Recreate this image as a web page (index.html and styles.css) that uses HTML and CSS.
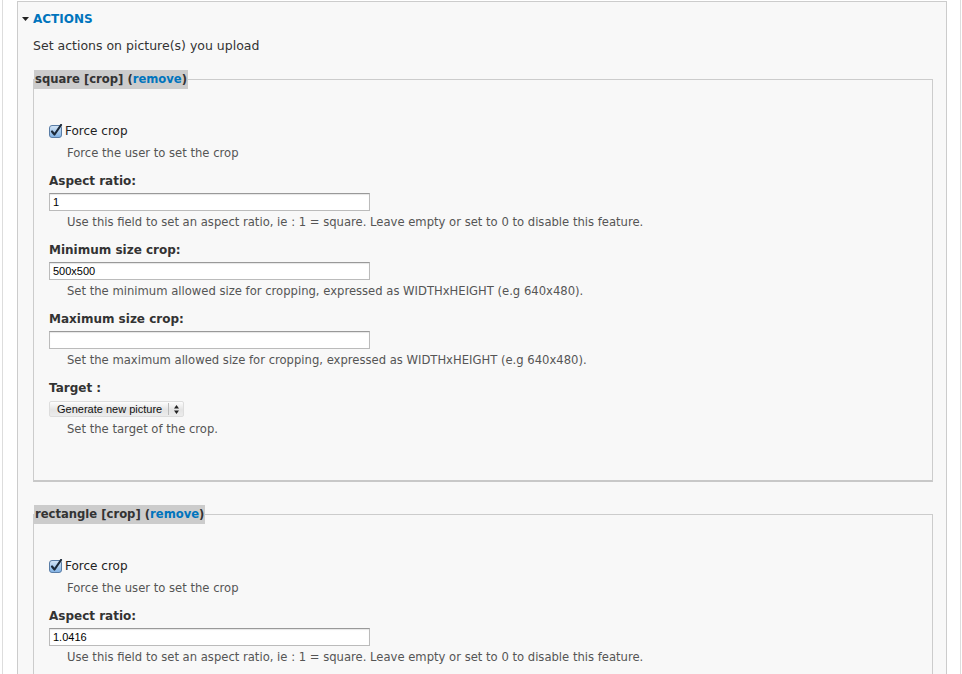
FILE: index.html
```html
<!DOCTYPE html>
<html lang="en">
<head>
    <meta charset="UTF-8">
    <meta name="viewport" content="width=device-width, initial-scale=1.0">
    <title>Actions</title>
    <link rel="stylesheet" href="styles.css">
</head>
<body>

    <div class="page">
        <div class="actions">
            <div class="actions-title">
                <svg class="toggle" width="7" height="4" viewBox="0 0 7 4"><path d="M0 0h7L3.5 4z" fill="#222"/></svg>
                <a href="#">ACTIONS</a>
            </div>
            <div class="actions-intro">Set actions on picture(s) you upload</div>

            <!-- first action -->
            <fieldset class="action">
                <legend>square [crop] (<a href="#">remove</a>)</legend>
                <div class="action-body">
                    <div class="check-row">
                        <svg class="checkbox" width="14" height="14" viewBox="0 0 14 14">
                            <defs>
                                <linearGradient id="cb1" x1="0" y1="0" x2="0" y2="1">
                                    <stop offset="0" stop-color="#d5e6f7"/>
                                    <stop offset="1" stop-color="#7fb0e3"/>
                                </linearGradient>
                            </defs>
                            <rect x="0.5" y="1.5" width="12" height="12" rx="2.5" fill="url(#cb1)" stroke="#5a7da6"/>
                            <path d="M3 7.5l2.5 3L12 1" fill="none" stroke="#1c2a3a" stroke-width="2.2" stroke-linecap="round" stroke-linejoin="round"/>
                        </svg>
                        <span>Force crop</span>
                    </div>
                    <div class="desc">Force the user to set the crop</div>

                    <div class="form-item">
                        <div class="field-label">Aspect ratio:</div>
                        <input class="text" type="text" value="1">
                        <div class="desc">Use this field to set an aspect ratio, ie : 1 = square. Leave empty or set to 0 to disable this feature.</div>
                    </div>

                    <div class="form-item">
                        <div class="field-label">Minimum size crop:</div>
                        <input class="text" type="text" value="500x500">
                        <div class="desc">Set the minimum allowed size for cropping, expressed as WIDTHxHEIGHT (e.g 640x480).</div>
                    </div>

                    <div class="form-item">
                        <div class="field-label">Maximum size crop:</div>
                        <input class="text" type="text" value="">
                        <div class="desc">Set the maximum allowed size for cropping, expressed as WIDTHxHEIGHT (e.g 640x480).</div>
                    </div>

                    <div class="form-item">
                        <div class="field-label target">Target :</div>
                        <div class="select">
                            <span class="select-value">Generate new picture</span>
                            <span class="select-arrows">
                                <svg width="5" height="9" viewBox="0 0 5 9"><path d="M2.5 0L5 3.5H0zM2.5 9L0 5.5h5z" fill="#222"/></svg>
                            </span>
                        </div>
                        <div class="desc">Set the target of the crop.</div>
                    </div>
                </div>
            </fieldset>

            <!-- second action -->
            <fieldset class="action">
                <legend>rectangle [crop] (<a href="#">remove</a>)</legend>
                <div class="action-body">
                    <div class="check-row">
                        <svg class="checkbox" width="14" height="14" viewBox="0 0 14 14">
                            <defs>
                                <linearGradient id="cb2" x1="0" y1="0" x2="0" y2="1">
                                    <stop offset="0" stop-color="#d5e6f7"/>
                                    <stop offset="1" stop-color="#7fb0e3"/>
                                </linearGradient>
                            </defs>
                            <rect x="0.5" y="1.5" width="12" height="12" rx="2.5" fill="url(#cb2)" stroke="#5a7da6"/>
                            <path d="M3 7.5l2.5 3L12 1" fill="none" stroke="#1c2a3a" stroke-width="2.2" stroke-linecap="round" stroke-linejoin="round"/>
                        </svg>
                        <span>Force crop</span>
                    </div>
                    <div class="desc">Force the user to set the crop</div>

                    <div class="form-item">
                        <div class="field-label">Aspect ratio:</div>
                        <input class="text" type="text" value="1.0416">
                        <div class="desc">Use this field to set an aspect ratio, ie : 1 = square. Leave empty or set to 0 to disable this feature.</div>
                    </div>
                </div>
            </fieldset>
        </div>
    </div>

</body>
</html>
```

FILE: styles.css
```css
body {
    margin: 0;
    font-family: "DejaVu Sans", Verdana, sans-serif;
    font-size: 12px;
    color: #333;
    background: #fff;
}
a {
    color: #0074bd;
    text-decoration: none;
}
.page {
    margin: 0 1px 0 2px;
    padding: 1px 13px 0 14px;
    border-left: 1px solid #ddd;
    border-right: 1px solid #ddd;
    height: 673px;
    overflow: hidden;
}
.actions {
    border: 1px solid #ccc;
    background: #f8f8f8;
    padding: 9px 13px 0 15px;
}
.actions-title {
    display: flex;
    align-items: center;
    gap: 4px;
    margin-left: -11px;
    line-height: 16px;
    font-weight: bold;
}
.toggle {
    display: block;
}
.actions-intro {
    margin-top: 11px;
    line-height: 16px;
    font-size: 12.5px;
}

/* each action is its own fieldset */
.action {
    margin: 16px 0 23px;
    padding: 0;
    border: 1px solid #ccc;
    border-bottom: 2px solid #c8c8c8;
    min-width: 0;
}
.action legend {
    margin: 0;
    padding: 1px 1px 2px;
    background: #ccc;
    font-weight: bold;
    font-size: 11.6px;
    line-height: 16px;
}
.action legend a {
    font-weight: bold;
}
.action-body {
    padding: 33px 0 43px 15px;
}
.check-row {
    display: flex;
    align-items: center;
    gap: 2px;
    height: 18px;
    line-height: 18px;
    color: #222;
}
.checkbox {
    display: block;
}
.desc {
    margin: 5px 0 0 18px;
    line-height: 16px;
    font-size: 11.6px;
    color: #555;
}
.form-item {
    margin-top: 12px;
}
.field-label {
    font-weight: bold;
    line-height: 16px;
    margin-bottom: 4px;
}
.field-label.target {
    margin-bottom: 5px;
}
.form-item .desc {
    margin-top: 3px;
}
input.text {
    display: block;
    box-sizing: border-box;
    width: 321px;
    height: 18px;
    margin: 0;
    padding: 0 3px;
    border: 1px solid #bbb;
    border-top-color: #999;
    box-shadow: inset 0 1px 1px rgba(0, 0, 0, 0.1);
    font-family: "Liberation Sans", Arial, sans-serif;
    font-size: 11px;
    color: #000;
    background: #fff;
}
.select {
    display: flex;
    align-items: center;
    box-sizing: border-box;
    width: 135px;
    height: 16px;
    border: 1px solid #ddd;
    border-radius: 2px;
    background: linear-gradient(#fdfdfd, #e4e4e4 55%, #ececec);
    font-family: "Liberation Sans", Arial, sans-serif;
    font-size: 11px;
    color: #111;
}
.select-value {
    flex: 1;
    padding-left: 7px;
    white-space: nowrap;
}
.select-arrows {
    display: flex;
    align-items: center;
    justify-content: center;
    width: 14px;
    height: 12px;
    border-left: 1px solid #bbb;
}
.target + .select + .desc {
    margin-top: 4px;
}
```
